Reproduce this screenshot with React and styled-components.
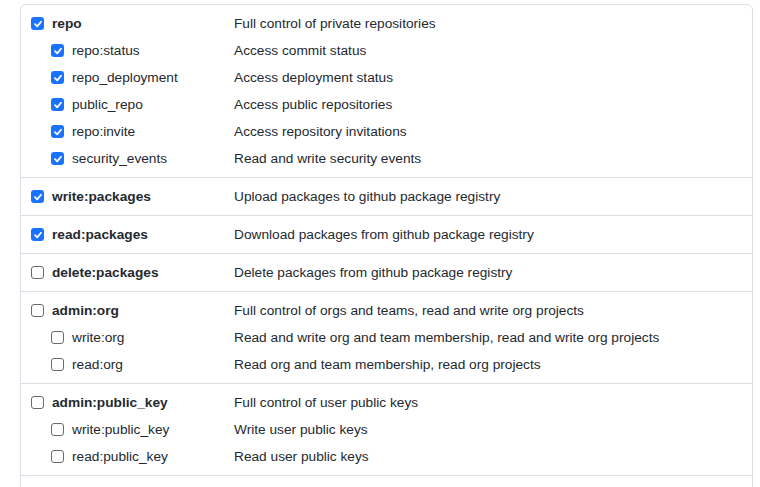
import React from "react";
import styled, { createGlobalStyle } from "styled-components";

const Global = createGlobalStyle`
  body { margin: 0; background: #fff; font-family: "Liberation Sans", Arial, sans-serif; color: #24292f; }
`;
const Page = styled.div`padding: 4px 7px 0 20px; height: 487px; overflow: hidden; box-sizing: border-box;`;
const Box = styled.div`border: 1px solid #d8dee4; border-radius: 6px;`;
const Group = styled.div`
  padding: 5px 0 5px;
  & + & { border-top: 1px solid #d8dee4; }
`;
const Row = styled.div`
  display: grid; grid-template-columns: 213px 1fr; height: 27px; align-items: center; font-size: 13.7px;
`;
const Scope = styled.label`
  display: flex; align-items: center; gap: 8px; padding-left: ${p => (p.$sub ? 30 : 10)}px;
  font-weight: ${p => (p.$sub ? 400 : 700)};
`;
const Desc = styled.span`color: #24292f;`;
const Check = styled.span`
  width: 13px; height: 13px; box-sizing: border-box; border-radius: 3px; flex: none;
  display: inline-flex; align-items: center; justify-content: center;
  background: ${p => (p.$on ? "#1a73ff" : "#fff")};
  border: ${p => (p.$on ? "none" : "1px solid #6b6b6b")};
`;

const CB = ({ on }) => (
  <Check $on={on}>
    {on && (
      <svg width="10" height="10" viewBox="0 0 10 10">
        <path d="M2 5.2 L4.2 7.4 L8 2.8" fill="none" stroke="#fff" strokeWidth="1.8" strokeLinecap="round" strokeLinejoin="round" />
      </svg>
    )}
  </Check>
);

const groups = [
  { on: true, items: [
    ["repo", "Full control of private repositories"],
    ["repo:status", "Access commit status"],
    ["repo_deployment", "Access deployment status"],
    ["public_repo", "Access public repositories"],
    ["repo:invite", "Access repository invitations"],
    ["security_events", "Read and write security events"],
  ]},
  { on: true, items: [["write:packages", "Upload packages to github package registry"]] },
  { on: true, items: [["read:packages", "Download packages from github package registry"]] },
  { on: false, items: [["delete:packages", "Delete packages from github package registry"]] },
  { on: false, items: [
    ["admin:org", "Full control of orgs and teams, read and write org projects"],
    ["write:org", "Read and write org and team membership, read and write org projects"],
    ["read:org", "Read org and team membership, read org projects"],
  ]},
  { on: false, items: [
    ["admin:public_key", "Full control of user public keys"],
    ["write:public_key", "Write user public keys"],
    ["read:public_key", "Read user public keys"],
  ]},
  { on: false, items: [["", ""]] },
];

export default function App() {
  return (
    <Page>
      <Global />
      <Box>
        {groups.map((g, gi) => (
          <Group key={gi}>
            {g.items.map(([name, desc], i) => (
              <Row key={name + i}>
                <Scope $sub={i > 0}><CB on={g.on} />{name}</Scope>
                <Desc>{desc}</Desc>
              </Row>
            ))}
          </Group>
        ))}
      </Box>
    </Page>
  );
}
